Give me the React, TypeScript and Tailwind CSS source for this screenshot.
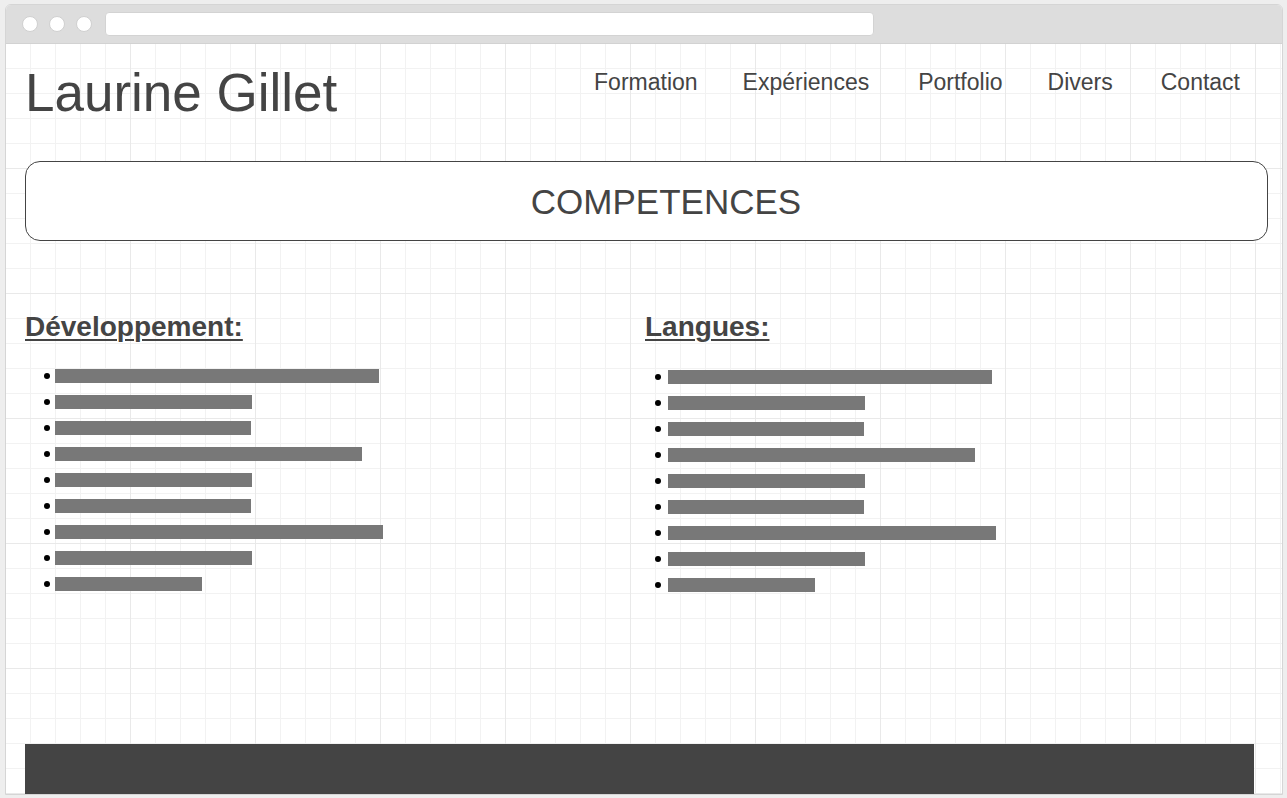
const bars = [324, 197, 196, 307, 197, 196, 328, 197, 147];

const navItems = [
  { label: "Formation", gap: "" },
  { label: "Expériences", gap: "ml-[45px]" },
  { label: "Portfolio", gap: "ml-[49px]" },
  { label: "Divers", gap: "ml-[45px]" },
  { label: "Contact", gap: "ml-[48px]" },
];

function SkillList({ title, listClass, dotGap }: { title: string; listClass: string; dotGap: string }) {
  return (
    <div className="w-[620px]">
      <h2 className="text-[28px] font-bold leading-[32px] text-[#444444] underline decoration-2 underline-offset-[3px]">
        {title}
      </h2>
      <ul className={listClass}>
        {bars.map((w, i) => (
          <li key={i} className="flex h-[26px] items-center">
            <span className="h-[6px] w-[6px] shrink-0 rounded-full bg-black" />
            <span className={`h-[14px] bg-[#787878] ${dotGap}`} style={{ width: w }} />
          </li>
        ))}
      </ul>
    </div>
  );
}

export default function App() {
  return (
    <div className="min-h-screen bg-[#eeeeee] pt-[4px] pl-[5px] pr-[4px] font-['Liberation_Sans',Arial,sans-serif]">
      <div className="flex h-[791px] flex-col overflow-hidden rounded-t-[6px] border border-[#d5d5d5] bg-white">
        {/* browser chrome */}
        <div className="flex h-[39px] shrink-0 items-center border-b border-[#d2d2d2] bg-[#dddddd]">
          <span className="ml-[16px] h-[16px] w-[16px] shrink-0 rounded-full border border-[#d0d0d0] bg-white" />
          <span className="ml-[11px] h-[16px] w-[16px] shrink-0 rounded-full border border-[#d0d0d0] bg-white" />
          <span className="ml-[11px] h-[16px] w-[16px] shrink-0 rounded-full border border-[#d0d0d0] bg-white" />
          <div className="ml-[13px] h-[24px] w-[769px] shrink-0 rounded-[4px] border border-[#d3d3d3] bg-white" />
        </div>

        {/* page */}
        <div className="flex flex-1 flex-col bg-white [background-image:linear-gradient(to_right,transparent_124px,#e9e9e9_124px),linear-gradient(to_bottom,transparent_124px,#e9e9e9_124px),linear-gradient(to_right,transparent_24px,#f2f2f2_24px),linear-gradient(to_bottom,transparent_24px,#f2f2f2_24px)] [background-size:125px_125px,125px_125px,25px_25px,25px_25px]">
          <header className="flex items-start justify-between pl-[19px] pr-[42px]">
            <h1 className="mt-[18px] text-[53px] leading-[61px] text-[#444444]">Laurine Gillet</h1>
            <nav className="mt-[25px] flex text-[23px] leading-[26px] text-[#444444]">
              {navItems.map((n) => (
                <a key={n.label} href="#" className={n.gap}>
                  {n.label}
                </a>
              ))}
            </nav>
          </header>

          <div className="ml-[19px] mr-[14px] mt-[38px] flex h-[80px] items-center justify-center rounded-[15px] border border-[#444444] bg-white pl-[39px]">
            <h2 className="text-[35px] leading-none text-[#444444]">COMPETENCES</h2>
          </div>

          <section className="ml-[19px] mt-[70px] flex">
            <SkillList title="Développement:" listClass="mt-[20px] pl-[19px]" dotGap="ml-[5px]" />
            <SkillList title="Langues:" listClass="mt-[21px] pl-[10px]" dotGap="ml-[7px]" />
          </section>

          <footer className="ml-[19px] mr-[28px] mt-auto h-[50px] shrink-0 bg-[#444444]" />
        </div>
      </div>
    </div>
  );
}
